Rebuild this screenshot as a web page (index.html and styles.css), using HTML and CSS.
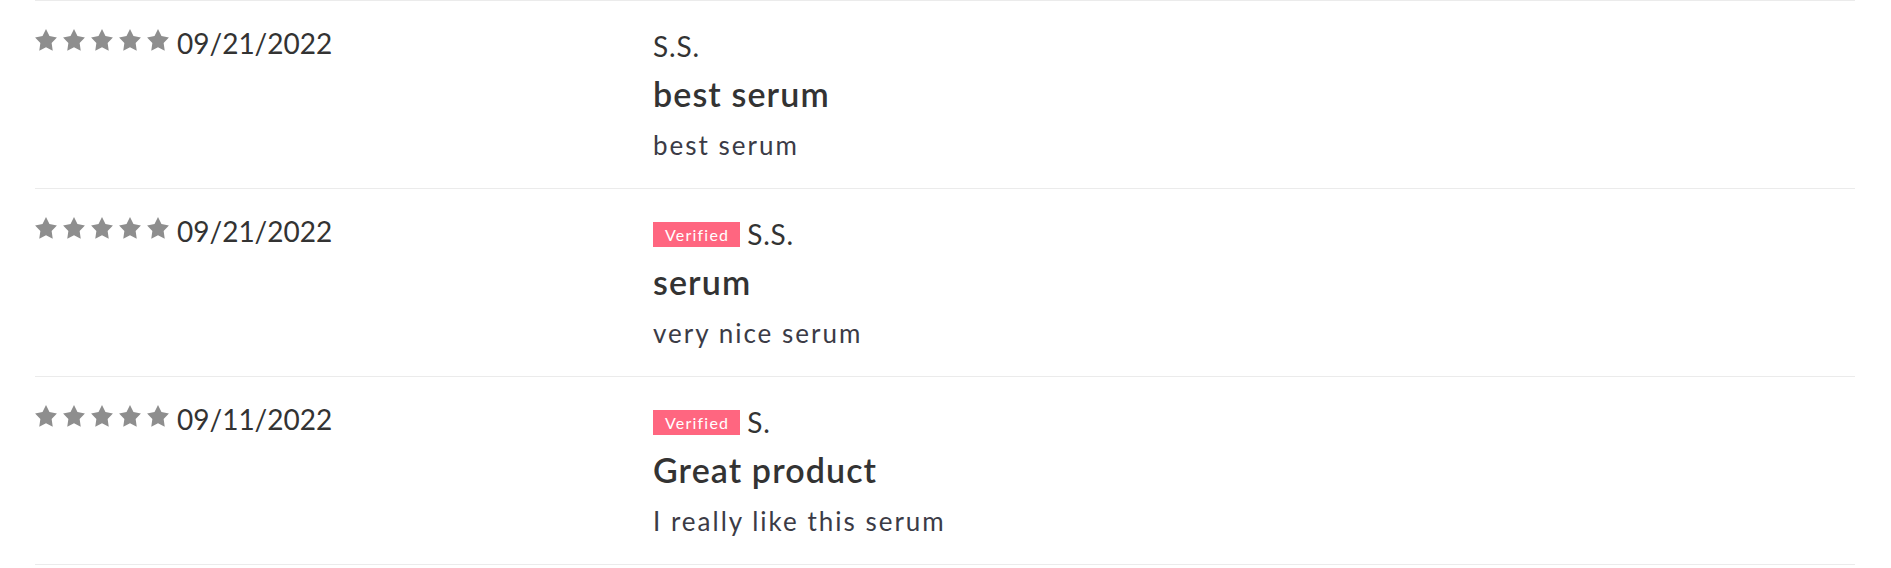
FILE: index.html
```html
<!DOCTYPE html>
<html lang="en">
<head>
<meta charset="utf-8">
<title>Reviews</title>
<link rel="stylesheet" href="styles.css">
</head>
<body>
<svg width="0" height="0" class="defs" aria-hidden="true">
  <defs>
    <symbol id="star" viewBox="0.5 0.5 23 22" preserveAspectRatio="none">
      <path d="M12 0.6L15.64 7.58 23.41 8.89 17.9 14.52 19.05 22.31 12 18.8 4.95 22.31 6.1 14.52 0.59 8.89 8.36 7.58Z"/>
    </symbol>
  </defs>
</svg>
<div class="reviews">
  <div class="review">
    <div class="meta">
      <div class="stars">
        <svg class="star" viewBox="0 0 22 22"><use href="#star" width="22" height="22"/></svg>
        <svg class="star" viewBox="0 0 22 22"><use href="#star" width="22" height="22"/></svg>
        <svg class="star" viewBox="0 0 22 22"><use href="#star" width="22" height="22"/></svg>
        <svg class="star" viewBox="0 0 22 22"><use href="#star" width="22" height="22"/></svg>
        <svg class="star" viewBox="0 0 22 22"><use href="#star" width="22" height="22"/></svg>
      </div>
      <span class="date">09/21/2022</span>
    </div>
    <div class="content">
      <div class="author"><span class="name">S.S.</span></div>
      <h3 class="title">best serum</h3>
      <p class="body">best serum</p>
    </div>
  </div>
  <div class="review">
    <div class="meta">
      <div class="stars">
        <svg class="star" viewBox="0 0 22 22"><use href="#star" width="22" height="22"/></svg>
        <svg class="star" viewBox="0 0 22 22"><use href="#star" width="22" height="22"/></svg>
        <svg class="star" viewBox="0 0 22 22"><use href="#star" width="22" height="22"/></svg>
        <svg class="star" viewBox="0 0 22 22"><use href="#star" width="22" height="22"/></svg>
        <svg class="star" viewBox="0 0 22 22"><use href="#star" width="22" height="22"/></svg>
      </div>
      <span class="date">09/21/2022</span>
    </div>
    <div class="content">
      <div class="author"><span class="badge">Verified</span><span class="name">S.S.</span></div>
      <h3 class="title">serum</h3>
      <p class="body">very nice serum</p>
    </div>
  </div>
  <div class="review">
    <div class="meta">
      <div class="stars">
        <svg class="star" viewBox="0 0 22 22"><use href="#star" width="22" height="22"/></svg>
        <svg class="star" viewBox="0 0 22 22"><use href="#star" width="22" height="22"/></svg>
        <svg class="star" viewBox="0 0 22 22"><use href="#star" width="22" height="22"/></svg>
        <svg class="star" viewBox="0 0 22 22"><use href="#star" width="22" height="22"/></svg>
        <svg class="star" viewBox="0 0 22 22"><use href="#star" width="22" height="22"/></svg>
      </div>
      <span class="date">09/11/2022</span>
    </div>
    <div class="content">
      <div class="author"><span class="badge">Verified</span><span class="name">S.</span></div>
      <h3 class="title">Great product</h3>
      <p class="body">I really like this serum</p>
    </div>
  </div>
</div>
</body>
</html>
```

FILE: styles.css
```css
html, body {
  margin: 0;
  padding: 0;
  background: #ffffff;
}

body {
  font-family: "Lato", "Open Sans", sans-serif;
  color: #333333;
}

.defs {
  position: absolute;
  width: 0;
  height: 0;
  overflow: hidden;
}

.reviews {
  margin: 0 36px 0 35px;
  border-bottom: 1px solid #ebebeb;
}

.review {
  display: grid;
  grid-template-columns: 618px 1fr;
  height: 187px;
  border-top: 1px solid #ebebeb;
}

.meta {
  display: flex;
  align-items: flex-start;
  gap: 8px;
  padding-top: 28px;
}

.stars {
  display: flex;
  gap: 6px;
}

.star {
  display: block;
  width: 22px;
  height: 22px;
  fill: #8e8e8e;
}

.date {
  font-size: 28px;
  line-height: 28px;
  color: #333;
}

.content {
  padding-top: 30px;
}

.author {
  display: flex;
  align-items: center;
  gap: 7px;
  height: 30px;
}

.badge {
  background: #ff6680;
  color: #fff;
  font-size: 16px;
  line-height: 25px;
  padding: 0 11px 0 12px;
  letter-spacing: 1.2px;
}

.name {
  font-size: 28px;
  line-height: 30px;
  color: #333;
  letter-spacing: 0.8px;
}

.title {
  margin: 14px 0 0;
  font-size: 34px;
  line-height: 38px;
  font-weight: 600;
  color: #333;
  letter-spacing: 1.1px;
}

.body {
  margin: 17px 0 0;
  font-size: 26px;
  line-height: 30px;
  color: #3b3b46;
  letter-spacing: 2px;
}
```
